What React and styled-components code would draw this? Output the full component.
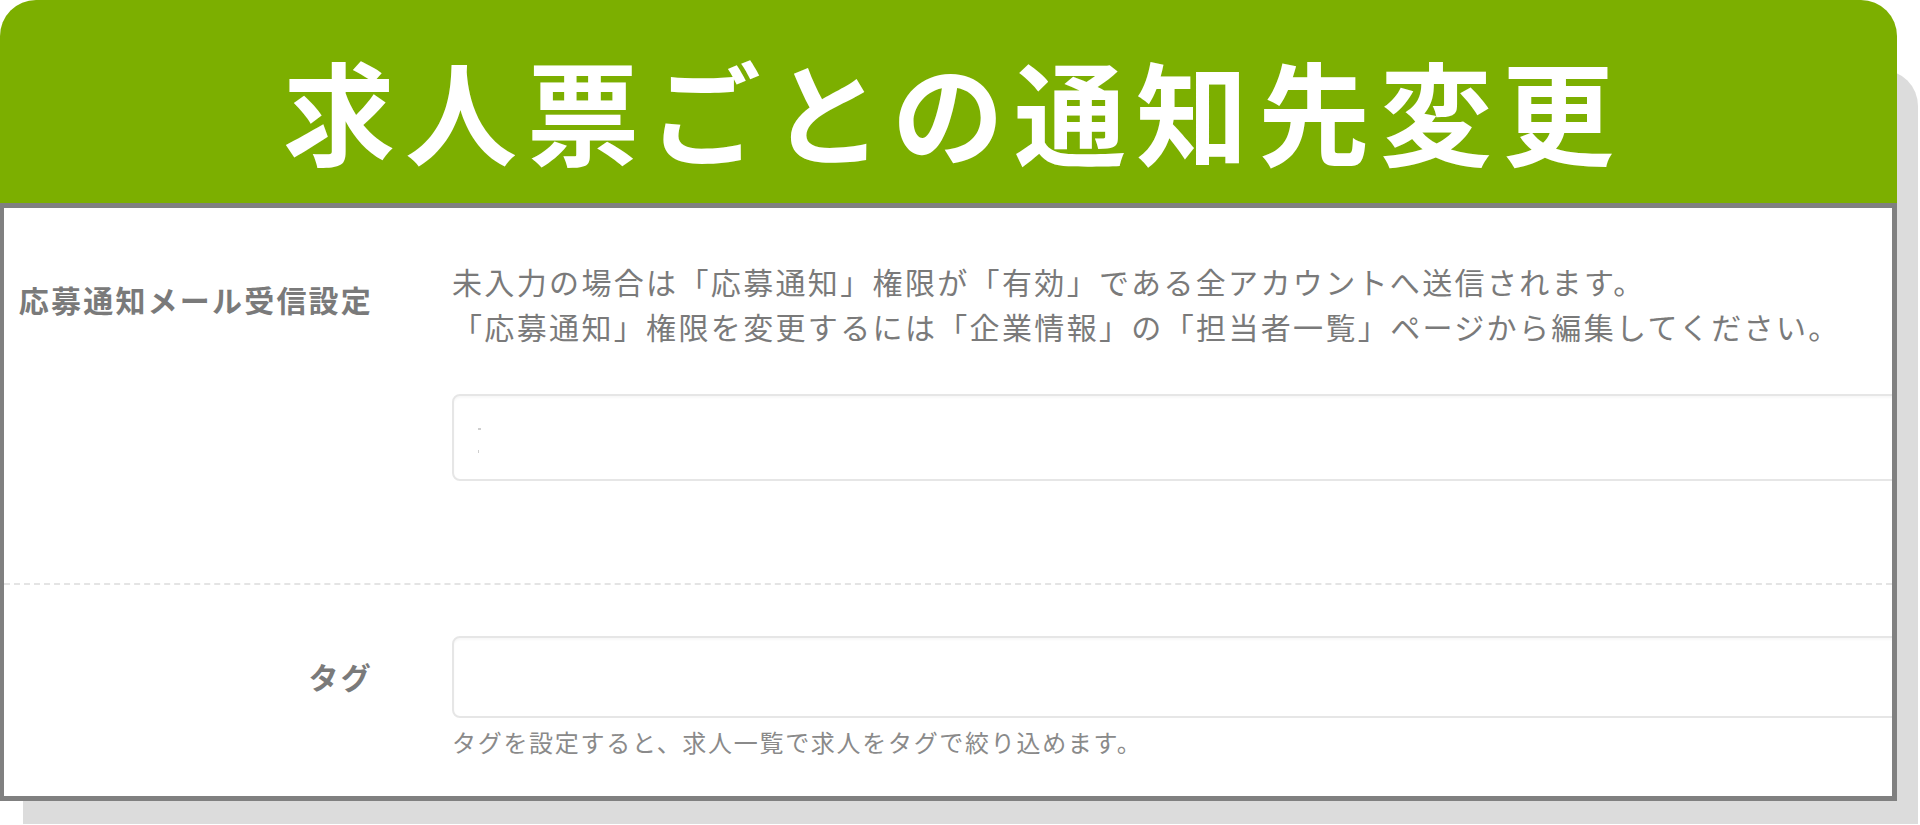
import React from 'react';
import styled, { createGlobalStyle } from 'styled-components';

const GlobalStyle = createGlobalStyle`
  html, body {
    margin: 0;
    padding: 0;
    background: #fff;
  }
  body {
    font-family: "Noto Sans CJK JP", "Noto Sans", sans-serif;
  }
`;

const App = () => {
  return (
    <>
      <GlobalStyle />
      <Page>
        <Card>
          <Header>
            <Title>求人票ごとの通知先変更</Title>
          </Header>

          <Panel>
            <Row $paddingTop={51} $paddingBottom={102} $dashed>
              <FieldLabel $offset={18}>応募通知メール受信設定</FieldLabel>
              <Field>
                <Description>
                  未入力の場合は「応募通知」権限が「有効」である全アカウントへ送信されます。
                  <br />
                  「応募通知」権限を変更するには「企業情報」の「担当者一覧」ページから編集してください。
                </Description>
                <InputBox $height={87} $marginTop={45}>
                  <Speck $top={32} />
                  <Speck $top={54} $tall />
                </InputBox>
              </Field>
            </Row>

            <Row $paddingTop={51} $paddingBottom={38}>
              <FieldLabel $offset={18}>タグ</FieldLabel>
              <Field>
                <InputBox $height={82} />
                <HelpText>タグを設定すると、求人一覧で求人をタグで絞り込めます。</HelpText>
              </Field>
            </Row>
          </Panel>
        </Card>
      </Page>
    </>
  );
};

// Layout
const Page = styled.div`
  width: 1920px;
  height: 825px;
  overflow: hidden;
  background: #fff;
`;

const Card = styled.div`
  position: relative;
  isolation: isolate;
  width: 1897px;

  /* flat drop shadow sitting behind the card */
  &::before {
    content: '';
    position: absolute;
    left: 23px;
    top: 70px;
    width: 1895px;
    height: 754px;
    background: #dcdcdc;
    border-top-right-radius: 36px;
    z-index: -1;
  }
`;

const Header = styled.div`
  height: 203px;
  box-sizing: border-box;
  padding-top: 14px;
  display: flex;
  align-items: center;
  justify-content: center;
  background: #7caf00;
  border-radius: 36px 36px 0 0;
`;

const Title = styled.h1`
  margin: 0;
  padding-left: 10px;
  font-family: "Noto Sans CJK JP", sans-serif;
  font-size: 112px;
  font-weight: 700;
  line-height: 1;
  letter-spacing: 10px;
  color: #fff;
`;

const Panel = styled.div`
  background: #fff;
  border: 5px solid #808080;
  border-left-width: 4px;
  overflow: hidden;
`;

const Row = styled.div`
  display: grid;
  grid-template-columns: 369px 1fr;
  column-gap: 79px;
  align-items: start;
  padding: ${p => p.$paddingTop}px 0 ${p => p.$paddingBottom}px;
  border-bottom: ${p => (p.$dashed ? '2px dashed #e4e4e4' : 'none')};
`;

const FieldLabel = styled.div`
  margin-top: ${p => p.$offset}px;
  text-align: right;
  font-size: 30px;
  font-weight: 700;
  line-height: 45px;
  letter-spacing: 2.2px;
  color: #7a7a7a;
  white-space: nowrap;
`;

const Field = styled.div`
  display: flex;
  flex-direction: column;
  min-width: 0;
`;

const Description = styled.p`
  margin: 0;
  font-size: 30px;
  line-height: 45px;
  letter-spacing: 2.35px;
  color: #7a7a7a;
  white-space: nowrap;
`;

const InputBox = styled.div`
  position: relative;
  width: calc(100% + 40px);
  height: ${p => p.$height}px;
  margin-top: ${p => p.$marginTop || 0}px;
  box-sizing: border-box;
  border: 2px solid #e6e6e6;
  border-radius: 8px;
  background: #fff;
  box-shadow: inset 0 2px 2px rgba(0, 0, 0, 0.03);
`;

const Speck = styled.span`
  position: absolute;
  left: 24px;
  top: ${p => p.$top}px;
  width: ${p => (p.$tall ? 1 : 3)}px;
  height: ${p => (p.$tall ? 3 : 2)}px;
  background: #cfcfcf;
`;

const HelpText = styled.div`
  margin-top: 8px;
  font-size: 24px;
  line-height: 32px;
  letter-spacing: 1.7px;
  color: #8a8a8a;
  white-space: nowrap;
`;

export default App;
